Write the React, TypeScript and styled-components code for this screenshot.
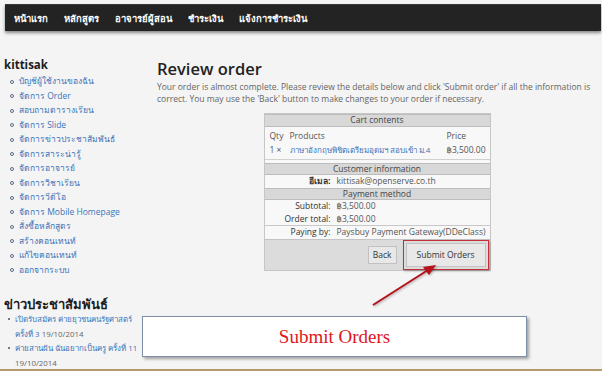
import React from 'react';
import styled, { createGlobalStyle } from 'styled-components';

const GlobalStyle = createGlobalStyle`
  html, body {
    margin: 0;
    padding: 0;
    background: #f4f4f4;
  }
  body {
    font-family: "Open Sans", "DejaVu Sans", sans-serif;
  }
`;

const Page = styled.div`
  position: relative;
  width: 602px;
  height: 371px;
  overflow: hidden;
  box-sizing: border-box;
  background: #f4f4f4;
  border-bottom: 2px solid #b59a6c;
`;

const NavBar = styled.nav`
  display: flex;
  align-items: center;
  height: 26px;
  margin: 4px 1px 0 5px;
  padding-left: 1px;
  background: #232323;
  border-top: 1px solid #3a3a3a;
  box-shadow: 0 2px 3px rgba(0, 0, 0, 0.45);
`;

const NavItem = styled.a`
  padding: 0 8px;
  color: #fff;
  font-size: 9.5px;
  font-weight: 700;
  text-decoration: none;
`;

const Columns = styled.div`
  display: flex;
`;

const Sidebar = styled.aside`
  width: 150px;
  padding: 26px 0 0 4px;
  box-sizing: border-box;
`;

const SideTitle = styled.h3<{ $gap?: number }>`
  margin: ${(p) => p.$gap ?? 0}px 0 0;
  font-size: ${(p) => (p.$gap ? 13 : 11.5)}px;
  line-height: 15px;
  font-weight: 700;
  color: #1c1c1c;
`;

const MenuList = styled.ul`
  list-style: none;
  margin: 2px 0 0;
  padding-left: 15px;
`;

const MenuItem = styled.li`
  position: relative;
  font-size: 8.5px;
  line-height: 14.5px;
  color: #3b74ba;

  &::before {
    content: '';
    position: absolute;
    left: -9px;
    top: 5.5px;
    width: 2px;
    height: 2px;
    border: 1px solid #5b6b84;
    border-radius: 50%;
  }
`;

const NewsList = styled.ul`
  list-style: none;
  margin: 0;
  padding-left: 11px;
  width: 128px;
`;

const NewsItem = styled.li`
  position: relative;
  font-size: 7.9px;
  line-height: 14.5px;
  color: #3b74ba;

  &::before {
    content: '';
    position: absolute;
    left: -7px;
    top: 6px;
    width: 2px;
    height: 2px;
    background: #6b7b94;
  }
`;

const Date = styled.span`
  color: #666;
`;

const Main = styled.main`
  flex: 1;
  padding: 28px 5px 0 7px;
`;

const Title = styled.h1`
  margin: 0;
  font-size: 16.5px;
  line-height: 20px;
  font-weight: 600;
  color: #222;
`;

const Intro = styled.p`
  margin: 2px 0 0;
  font-size: 8.5px;
  line-height: 11.5px;
  color: #666;
`;

const Card = styled.div`
  width: 225px;
  margin: 9px auto 0;
  border: 1px solid #c6c6c6;
  background: #f8f8f8;
  font-size: 8.5px;
  color: #555;
`;

const SectionHead = styled.div`
  background: #d8d8d8;
  border-top: 1px solid #bdbdbd;
  border-bottom: 1px solid #bdbdbd;
  text-align: center;
  line-height: 10.5px;
  color: #444;
`;

const CartBox = styled.div`
  margin: 0 0 3px;
  padding: 2px 5px 2px;
  border-bottom: 1px solid #d0d0d0;
`;

const CartRow = styled.div`
  display: grid;
  grid-template-columns: 20px 157px auto;
  line-height: 14px;
  white-space: nowrap;
`;

const ProductLink = styled.span`
  font-size: 8px;
  color: #3b74ba;
`;

const InfoRow = styled.div<{ $line?: boolean }>`
  display: grid;
  grid-template-columns: 66px 1fr;
  column-gap: 6px;
  line-height: 12.5px;
  white-space: nowrap;
  border-top: ${(p) => (p.$line ? '1px solid #c8c8c8' : 'none')};
`;

const Label = styled.span<{ $bold?: boolean }>`
  text-align: right;
  color: #333;
  font-weight: ${(p) => (p.$bold ? 700 : 400)};
`;

const ButtonBar = styled.div`
  display: flex;
  justify-content: flex-end;
  align-items: center;
  gap: 6px;
  height: 30px;
  padding-right: 1px;
  background: #dcdcdc;
  border-top: 1px solid #c4c4c4;
`;

const Button = styled.button<{ $wide?: boolean }>`
  height: ${(p) => (p.$wide ? 24 : 18)}px;
  padding: 0 ${(p) => (p.$wide ? 10 : 4)}px;
  font-family: inherit;
  font-size: 8.5px;
  color: #333;
  background: #e8e8e8;
  border: 1px solid #c2c2c2;
`;

const Highlight = styled.div`
  padding: 2px;
  border: 1.5px solid #c3303a;
  box-shadow: 1px 1px 2px rgba(0, 0, 0, 0.35);
`;

const Arrow = styled.svg`
  position: absolute;
  left: 366px;
  top: 258px;
  filter: drop-shadow(1px 1px 1px rgba(0, 0, 0, 0.3));
`;

const Callout = styled.div`
  position: absolute;
  left: 142px;
  top: 316px;
  width: 385px;
  height: 41px;
  box-sizing: border-box;
  display: flex;
  align-items: center;
  justify-content: center;
  background: #fff;
  border: 1px solid #7f8fa8;
  box-shadow: 2px 2px 3px rgba(0, 0, 0, 0.35);
  font-family: "Liberation Serif", serif;
  font-size: 19px;
  color: #e0161c;
`;

const menu = [
  'บัญชีผู้ใช้งานของฉัน',
  'จัดการ Order',
  'สอบถามตารางเรียน',
  'จัดการ Slide',
  'จัดการข่าวประชาสัมพันธ์',
  'จัดการสาระน่ารู้',
  'จัดการอาจารย์',
  'จัดการวิชาเรียน',
  'จัดการวีดีโอ',
  'จัดการ Mobile Homepage',
  'สั่งซื้อหลักสูตร',
  'สร้างคอนเทนท์',
  'แก้ไขคอนเทนท์',
  'ออกจากระบบ',
];

const nav = ['หน้าแรก', 'หลักสูตร', 'อาจารย์ผู้สอน', 'ชำระเงิน', 'แจ้งการชำระเงิน'];

export default function App() {
  return (
    <>
      <GlobalStyle />
      <Page>
        <NavBar>
          {nav.map((n) => (
            <NavItem key={n}>{n}</NavItem>
          ))}
        </NavBar>
        <Columns>
          <Sidebar>
            <SideTitle>kittisak</SideTitle>
            <MenuList>
              {menu.map((m) => (
                <MenuItem key={m}>{m}</MenuItem>
              ))}
            </MenuList>
            <SideTitle $gap={20}>ข่าวประชาสัมพันธ์</SideTitle>
            <NewsList>
              <NewsItem>
                เปิดรับสมัคร ค่ายยุวชนคนรัฐศาสตร์ ครั้งที่ 3 <Date>19/10/2014</Date>
              </NewsItem>
              <NewsItem>
                ค่ายสานฝัน ฉันอยากเป็นครู ครั้งที่ 11 <Date>19/10/2014</Date>
              </NewsItem>
              <NewsItem>เปิดรับสมัครนักเรียนเตรียมสอบเข้า</NewsItem>
            </NewsList>
          </Sidebar>
          <Main>
            <Title>Review order</Title>
            <Intro>
              Your order is almost complete. Please review the details below and click 'Submit order' if all the
              information is correct. You may use the 'Back' button to make changes to your order if necessary.
            </Intro>
            <Card>
              <SectionHead>Cart contents</SectionHead>
              <CartBox>
                <CartRow>
                  <span>Qty</span>
                  <span>Products</span>
                  <span>Price</span>
                </CartRow>
                <CartRow>
                  <span>1 ×</span>
                  <ProductLink>ภาษาอังกฤษพิชิตเตรียมอุดมฯ สอบเข้า ม.4</ProductLink>
                  <span>฿3,500.00</span>
                </CartRow>
              </CartBox>
              <SectionHead>Customer information</SectionHead>
              <InfoRow>
                <Label $bold>อีเมล:</Label>
                <span>kittisak@openserve.co.th</span>
              </InfoRow>
              <SectionHead>Payment method</SectionHead>
              <InfoRow>
                <Label>Subtotal:</Label>
                <span>฿3,500.00</span>
              </InfoRow>
              <InfoRow>
                <Label>Order total:</Label>
                <span>฿3,500.00</span>
              </InfoRow>
              <InfoRow $line>
                <Label>Paying by:</Label>
                <span>Paysbuy Payment Gateway(DDeClass)</span>
              </InfoRow>
              <ButtonBar>
                <Button>Back</Button>
                <Highlight>
                  <Button $wide>Submit Orders</Button>
                </Highlight>
              </ButtonBar>
            </Card>
          </Main>
        </Columns>
        <Arrow width="80" height="52" viewBox="0 0 80 52">
          <line x1="7" y1="47" x2="62" y2="12" stroke="#b5121b" strokeWidth="2" />
          <polygon points="70,7 57,9 63,17" fill="#b5121b" />
        </Arrow>
        <Callout>Submit Orders</Callout>
      </Page>
    </>
  );
}
